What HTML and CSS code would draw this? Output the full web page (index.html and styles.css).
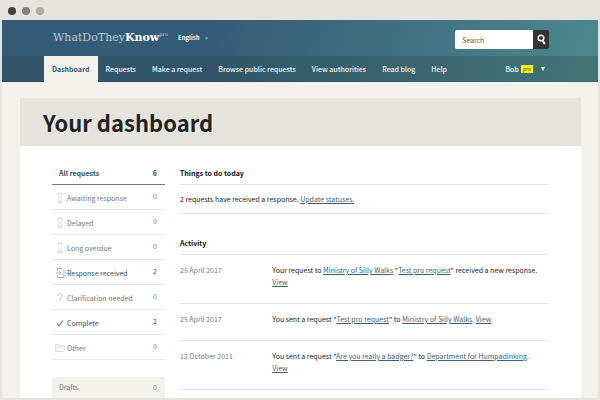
FILE: index.html
```html
<!DOCTYPE html>
<html lang="en">
<head>
<meta charset="utf-8">
<title>Your dashboard - WhatDoTheyKnow</title>
<link rel="stylesheet" href="styles.css">
</head>
<body>
<div class="window">
  <div class="titlebar"><span class="dot dot-dark"></span><span class="dot dot-mid"></span><span class="dot"></span></div>
  <div class="page">
    <header class="header">
      <div class="brandbar">
        <a class="logo" href="#">WhatDoThey<b>Know</b><sup>pro</sup></a>
        <button class="language" type="button">English
          <svg width="5" height="3" viewBox="0 0 5 3" aria-hidden="true"><path d="M0.5 0.5H4.5L2.5 2.5Z" fill="#9db4c2"/></svg>
        </button>
        <form class="search" role="search">
          <input type="search" placeholder="Search" aria-label="Search">
          <button type="submit" aria-label="Submit search">
            <svg width="9" height="11" viewBox="0 0 9 11" aria-hidden="true"><circle cx="4" cy="4" r="2.8" fill="none" stroke="#fff" stroke-width="1.5"/><path d="M5.4 6.4L7.8 10" stroke="#fff" stroke-width="2"/></svg>
          </button>
        </form>
      </div>
      <nav class="nav">
        <a class="current" href="#">Dashboard</a>
        <a href="#">Requests</a>
        <a href="#">Make a request</a>
        <a href="#">Browse public requests</a>
        <a href="#">View authorities</a>
        <a href="#">Read blog</a>
        <a href="#">Help</a>
        <button class="account" type="button">Bob <span class="badge">pro</span>
          <svg width="4" height="4" viewBox="0 0 4 4" aria-hidden="true"><path d="M0 0H4L2 4Z" fill="#fff"/></svg>
        </button>
      </nav>
    </header>
    <main class="content">
      <h1>Your dashboard</h1>
      <div class="columns">
        <aside class="sidebar">
          <ul class="filters">
            <li class="all"><a href="#">All requests</a><span>6</span></li>
            <li><svg class="icon" viewBox="0 0 10 12"><use href="#hourglass"/></svg><a href="#">Awaiting response</a><span>0</span></li>
            <li><svg class="icon" viewBox="0 0 10 12"><use href="#hourglass"/></svg><a href="#">Delayed</a><span>0</span></li>
            <li><svg class="icon" viewBox="0 0 10 12"><use href="#hourglass"/></svg><a href="#">Long overdue</a><span>0</span></li>
            <li class="active"><svg class="icon" viewBox="0 0 10 12"><path d="M2.5 4V1.5H7L9 3.5V10.5H2.5V8M0.5 6H6M4 4L6 6L4 8" fill="none" stroke="#9b9b9b" stroke-width=".8"/></svg><a href="#">Response received</a><span>2</span></li>
            <li><svg class="icon" viewBox="0 0 10 12"><path d="M2.8 4C2.8 1.2 7 1.3 7 3.7C7 5.6 4.9 5.4 4.9 7.8M4.9 9.3V10.5" fill="none" stroke="#bbb"/></svg><a href="#">Clarification needed</a><span>0</span></li>
            <li class="active"><svg class="icon" viewBox="0 0 10 12"><path d="M2 6.5L4 8.8L8 3.5" fill="none" stroke="#777" stroke-width="1.1"/></svg><a href="#">Complete</a><span>2</span></li>
            <li><svg class="icon" viewBox="0 0 10 12"><path d="M0.5 9.5V3.5Q0.5 2.5 1.5 2.5H3.5L4.5 3.5H8.5Q9.5 3.5 9.5 4.5V8.5Q9.5 9.5 8.5 9.5H0.5M0.5 5H9" fill="none" stroke="#d4d4d4" stroke-width=".8"/></svg><a href="#">Other</a><span>0</span></li>
          </ul>
          <a class="drafts" href="#">Drafts<span>0</span></a>
        </aside>
        <div class="feed">
          <section>
            <h2>Things to do today</h2>
            <p class="todo">2 requests have received a response. <a href="#">Update statuses.</a></p>
          </section>
          <section>
            <h2>Activity</h2>
            <ul class="activity">
              <li><time>25 April 2017</time><p>Your request to <a href="#">Ministry of Silly Walks</a> "<a href="#">Test pro request</a>" received a new response. <a href="#">View</a></p></li>
              <li><time>25 April 2017</time><p>You sent a request "<a href="#">Test pro request</a>" to <a href="#">Ministry of Silly Walks</a>. <a href="#">View</a></p></li>
              <li><time>12 October 2011</time><p>You sent a request "<a href="#">Are you really a badger?</a>" to <a href="#">Department for Humpadinking</a>. <a href="#">View</a></p></li>
            </ul>
          </section>
        </div>
      </div>
    </main>
  </div>
</div>
<svg class="symbols" aria-hidden="true">
  <symbol id="hourglass" viewBox="0 0 10 12"><path d="M3.2 1.5H6.8V4.5L5.5 6L6.8 7.5V10.5H3.2V7.5L4.5 6L3.2 4.5ZM2.5 1.2H7.5M2.5 10.8H7.5M4 9H6" fill="none" stroke="#d6d6d6" stroke-width=".8"/></symbol>
</svg>
</body>
</html>
```
FILE: styles.css
```css
* { box-sizing: border-box; }
body, h1, h2, p, ul { margin: 0; padding: 0; }
ul { list-style: none; }
body {
  background: #e4e3de;
  color: #222;
  font: 7px/12px "Noto Sans CJK JP", "Noto Sans", sans-serif;
}
button, input { font: inherit; border: 0; padding: 0; margin: 0; }
button { background: none; color: inherit; cursor: pointer; }

.window { height: 100vh; padding: 0 2px 2px; display: flex; flex-direction: column; }
.titlebar { flex: none; height: 20px; padding: 2px 6px 0; display: flex; align-items: center; gap: 6px; }
.dot { width: 8px; height: 8px; border-radius: 50%; background: #adaca9; }
.dot-dark { background: #443e36; }
.dot-mid { background: #828180; }
.page { flex: 1; min-height: 0; overflow: hidden; background: #f2f1ec; }

.header { background: linear-gradient(110deg, #355c77 35%, #4c898d); color: #fff; }
.brandbar { height: 36px; padding: 0 49px 0 51px; display: flex; align-items: center; }
.logo { color: #b9cad4; font: 11px/16px "DejaVu Serif", serif; text-decoration: none; display: flex; }
.logo b { color: #fff; }
.logo sup { font-size: 5px; line-height: 8px; }
.language { margin-left: 10px; font-size: 6px; font-weight: bold; display: flex; align-items: center; gap: 4px; }
.search { margin-left: auto; margin-top: 3px; display: flex; height: 19px; border-radius: 2px; overflow: hidden; }
.search input { width: 78px; padding: 0 7px; background: #fff; color: #444; outline: 0; appearance: none; }
.search input::placeholder { color: #555; opacity: 1; }
.search button { width: 16px; background: #333; display: grid; place-items: center; }

.nav { height: 26px; padding: 0 53px 0 42px; display: flex; background: rgba(40, 60, 60, .25); border-bottom: 1px solid rgba(0, 0, 0, .1); font-weight: 500; }
.nav a { padding: 0 8px; line-height: 27px; color: #eef3f4; text-decoration: none; white-space: nowrap; }
.nav .current { background: #f2f1ec; color: #355c77; font-weight: bold; height: 26px; }
.account { margin-left: auto; display: flex; align-items: center; gap: 2px; }
.account svg { margin-left: 6px; }
.badge { background: #ff0; color: #555; font-size: 5px; line-height: 8px; padding: 0 2px; }

.content { margin: 16px 17px 0 18px; background: #fff; }
h1 { padding: 0 23px; font-size: 22px; line-height: 48px; background: #e4e3de; color: #222; text-shadow: 1px 1px 0 #f8f5ec; }
.columns { display: flex; gap: 15px; padding: 21px 32px 0; }
.sidebar { flex: 0 0 113px; }
.filters li { height: 25px; display: flex; align-items: center; border-bottom: 1px solid #e6e6e6; color: #777; padding: 2px 8px 0 3px; }
.filters li.all { height: 18px; padding: 0 8px 5px 7px; border-color: #777; color: #2f4f65; font-weight: bold; }
.filters a { color: inherit; text-decoration: none; }
.filters span { margin-left: auto; padding-bottom: 4px; }
.filters .all span { padding: 0; }
.filters .active { color: #2f4f5f; }
.icon { width: 10px; height: 12px; margin-right: 2px; }
.drafts { margin-top: 17px; padding: 4px 8px 6px 7px; display: flex; justify-content: space-between; background: #f2f1ec; color: #777; text-decoration: none; }
.feed { flex: 1; min-width: 0; }
.feed a { color: #3c5e73; }
h2 { font-size: 7px; line-height: 12px; padding-bottom: 5px; border-bottom: 1px solid #e3e3e3; color: #111; }
.todo { padding: 8px 0; border-bottom: 1px solid #e3e3e3; margin-bottom: 23px; }
.activity li { display: grid; grid-template-columns: 1fr 3fr; padding: 9px 0 15px; border-bottom: 1px solid #e3e3e3; }
.activity p { padding-right: 5px; }
.activity time { color: #777; }
.symbols { display: none; }
```
